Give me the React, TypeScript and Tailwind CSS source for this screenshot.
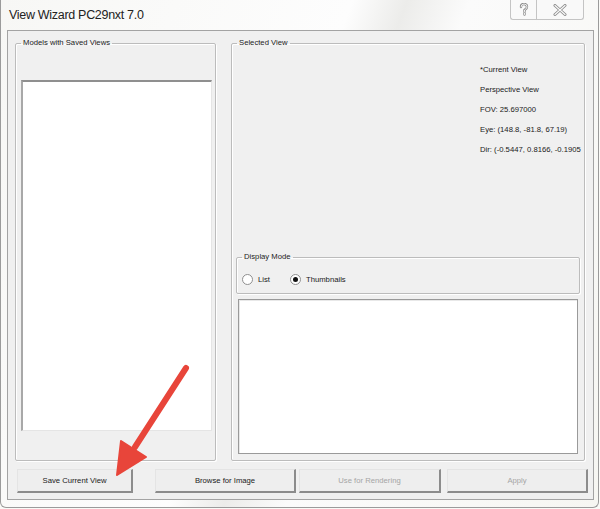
import React from 'react';

const ui = { fontFamily: '"Liberation Sans", Arial, sans-serif' };

function Groupbox({ label, className, children }: { label: string; className?: string; children?: React.ReactNode }) {
  return (
    <fieldset className={`border border-[#bcbcbc] rounded-[2px] shadow-[inset_1px_1px_0_#fff,1px_1px_0_#fff] min-w-0 ${className ?? ''}`}>
      <legend className="ml-[5px] px-[2px] text-[7.7px] leading-[10px] text-[#1a1a1a]">{label}</legend>
      {children}
    </fieldset>
  );
}

function WinButton({ label, disabled, className }: { label: string; disabled?: boolean; className?: string }) {
  return (
    <button
      className={`h-[24px] bg-[#eeeeee] border-t border-l border-t-[#e4e4e4] border-l-[#e4e4e4] border-r-2 border-b-2 border-r-[#8c8c8c] border-b-[#8c8c8c] text-[7.7px] ${disabled ? 'text-[#a5a5a5]' : 'text-[#1a1a1a]'} ${className ?? ''}`}
    >
      {label}
    </button>
  );
}

function Radio({ checked, label }: { checked?: boolean; label: string }) {
  return (
    <label className="flex items-center gap-[5px]">
      <span className="w-[11px] h-[11px] rounded-full border border-[#8f8f8f] bg-white flex items-center justify-center">
        {checked && <span className="w-[5px] h-[5px] rounded-full bg-[#111]" />}
      </span>
      <span className="text-[7.7px] text-[#1a1a1a]">{label}</span>
    </label>
  );
}

export default function App() {
  const info = [
    '*Current View',
    'Perspective View',
    'FOV: 25.697000',
    'Eye: (148.8, -81.8, 67.19)',
    'Dir: (-0.5447, 0.8166, -0.1905',
  ];

  return (
    <div style={ui} className="relative w-[600px] h-[509px] overflow-hidden bg-[#fafaf7]">
      <div className="w-[599px] h-[508px] flex flex-col rounded-b-[6px] border-l border-b border-r border-[#9b9b9b] bg-[linear-gradient(110deg,#f7f7f5_0%,#fdfdfd_45%,#ececea_52%,#fbfbfb_60%,#f6f6f2_100%)]">
        {/* title bar */}
        <div className="h-[30px] flex items-start shrink-0">
          <span className="pl-[8px] pt-[8px] text-[12.5px] leading-[15px] tracking-[-0.3px] text-[#222]">View Wizard PC29nxt 7.0</span>
          <div className="ml-auto mr-[14px] flex h-[20px]">
            <div className="w-[26px] border-l border-b border-[#c4c4c4] rounded-bl-[3px] bg-[#f9f9f9] flex items-center justify-center">
              <svg width="10" height="13" viewBox="0 0 10 13">
                <path d="M2 4 Q2 1 5 1 Q8 1 8 3.8 Q8 5.6 6 6.6 L5.5 7 L5.5 8.5 M5.5 10 L5.5 11.5" fill="none" stroke="#8a8a8a" strokeWidth="2.4" strokeLinecap="round" />
                <path d="M2 4 Q2 1 5 1 Q8 1 8 3.8 Q8 5.6 6 6.6 L5.5 7 L5.5 8.5 M5.5 10 L5.5 11.5" fill="none" stroke="#fafafa" strokeWidth="0.9" strokeLinecap="round" />
              </svg>
            </div>
            <div className="w-[48px] border-l border-b border-r border-[#c4c4c4] rounded-br-[3px] bg-[#f9f9f9] flex items-center justify-center">
              <svg width="14" height="12" viewBox="0 0 14 12">
                <path d="M2 1.5 L12 10.5 M12 1.5 L2 10.5" fill="none" stroke="#8a8a8a" strokeWidth="3" strokeLinecap="round" />
                <path d="M2 1.5 L12 10.5 M12 1.5 L2 10.5" fill="none" stroke="#fafafa" strokeWidth="1.2" strokeLinecap="round" />
              </svg>
            </div>
          </div>
        </div>

        {/* client area */}
        <div className="ml-[6px] w-[587px] h-[470px] border border-[#a3a3a3] bg-[#f0f0f0] flex flex-col">
          <div className="flex pl-[7px] pt-[7px] gap-[15px] h-[430px]">
            <Groupbox label="Models with Saved Views" className="w-[201px] flex flex-col">
              <div className="mt-[32px] ml-[5px] w-[191px] h-[351px] bg-white border-t-2 border-l-2 border-t-[#8f8f8f] border-l-[#a8a8a8] border-r border-b border-r-[#e5e5e5] border-b-[#e5e5e5]" />
            </Groupbox>
            <Groupbox label="Selected View" className="w-[354px] flex flex-col">
              <div className="h-[204px] pl-[248px] pt-[16px] flex flex-col gap-[9px]">
                {info.map((t) => (
                  <span key={t} className="text-[7.7px] leading-[11px] text-[#1a1a1a] whitespace-nowrap">
                    {t}
                  </span>
                ))}
              </div>
              <Groupbox label="Display Mode" className="mx-[4px] h-[42px]">
                <div className="flex items-center gap-[20px] pl-[5px] pt-[12px]">
                  <Radio label="List" />
                  <Radio checked label="Thumbnails" />
                </div>
              </Groupbox>
              <div className="mt-[5px] mx-[6px] h-[155px] bg-white border border-[#9a9a9a] shadow-[inset_1px_1px_0_#e8e8e8]" />
            </Groupbox>
          </div>
          <div className="flex items-start pt-[8px]">
            <WinButton label="Save Current View" className="ml-[9px] w-[116px]" />
            <WinButton label="Browse for Image" className="ml-[22px] w-[141px]" />
            <WinButton label="Use for Rendering" disabled className="ml-[3px] w-[142px]" />
            <WinButton label="Apply" disabled className="ml-[6px] w-[141px]" />
          </div>
        </div>
      </div>

      {/* annotation arrow */}
      <svg className="absolute left-0 top-0 pointer-events-none" width="600" height="509">
        <line x1="186" y1="368" x2="135" y2="447" stroke="#e8453a" strokeWidth="6" strokeLinecap="round" />
        <polygon points="117,475 121,441 146,457" fill="#e8453a" stroke="#e8453a" strokeWidth="2" strokeLinejoin="round" />
      </svg>
    </div>
  );
}
